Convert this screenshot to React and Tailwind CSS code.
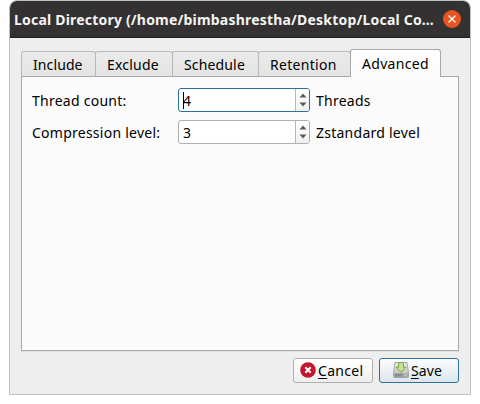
const TABS = [
  { name: 'Include', box: 'w-[75px] pl-[11px]', text: 'tracking-[0.1px]' },
  { name: 'Exclude', box: 'w-[78px] -ml-px pl-[11px]', text: 'tracking-[0.2px]' },
  { name: 'Schedule', box: 'w-[87px] -ml-px pl-[11px]', text: 'tracking-[0.15px]' },
  { name: 'Retention', box: 'w-[93px] -ml-px pl-[11px]', text: 'tracking-[0.3px]' },
];

function SpinBox({ value, focused }) {
  return (
    <div
      className={`flex h-6 w-[132px] shrink-0 overflow-hidden rounded-[3px] border bg-white ${
        focused ? 'border-[#2a71a0]' : 'border-[#b0b0b0]'
      }`}
    >
      <div className="flex flex-1 items-center pl-1">
        <span className={`h-[17px] w-px ${focused ? 'bg-black' : ''}`} />
        <span className="-ml-px pt-0.5">{value}</span>
      </div>
      <div className="flex w-[14px] items-center justify-center border-l border-[#b5b5b5] bg-gradient-to-b from-white to-[#f0f0f0]">
        <svg width="8" height="14" viewBox="0 0 8 14" fill="#5c5c5c">
          <path d="M4 0.5 7.5 4.5H0.5Z" />
          <path d="M4 13.5 7.5 9.5H0.5Z" />
        </svg>
      </div>
    </div>
  );
}

function Row({ label, value, unit, focused }) {
  return (
    <div className="flex h-6 items-center">
      <span className="w-[146px] shrink-0 pt-0.5 tracking-[0.25px]">{label}</span>
      <SpinBox value={value} focused={focused} />
      <span className="ml-1.5 pt-0.5 tracking-[0.25px]">{unit}</span>
    </div>
  );
}

function CancelIcon() {
  return (
    <svg width="16" height="16" viewBox="0 0 16 16" className="-mt-px">
      <circle cx="8" cy="8" r="7.8" fill="#c4162f" />
      <path d="M5.3 5.3 10.7 10.7M10.7 5.3 5.3 10.7" stroke="#fff" strokeWidth="2" />
    </svg>
  );
}

function SaveIcon() {
  return (
    <svg width="16" height="16" viewBox="0 0 16 16" className="-mt-px">
      <defs>
        <linearGradient id="disk" x1="0" y1="0" x2="0" y2="1">
          <stop offset="0" stopColor="#eeeeee" />
          <stop offset="1" stopColor="#b5b5b5" />
        </linearGradient>
      </defs>
      <path d="M2 .5H14L15.5 10.5V14.5Q15.5 15.5 14.5 15.5H1.5Q.5 15.5 .5 14.5V10.5Z" fill="url(#disk)" stroke="#959595" strokeWidth=".8" />
      <path d="M1.2 11.2H14.8V14.8H1.2Z" fill="#a2a2a2" />
      <path d="M2 12.4H9M2 13.9H9" stroke="#757575" strokeWidth=".7" />
      <path d="M11 12H14M11 13.6H14" stroke="#ccc" strokeWidth=".8" />
      <ellipse cx="8" cy="9" rx="5" ry="1.8" fill="#ccc" />
      <path d="M5.5 .5H10.5V5.3H13L8 10.3 3 5.3H5.5Z" fill="#c3e391" stroke="#7ba644" strokeWidth="1" />
    </svg>
  );
}

export default function App() {
  return (
    <div className="h-[404px] w-[480px] overflow-hidden bg-white pl-[9px] font-['Noto_Sans','Open_Sans',sans-serif] text-[14px] leading-5 text-black">
      <div className="flex h-[395px] w-[462px] flex-col overflow-hidden rounded-t-[8px] border border-[#bfbfbf] bg-[#eeeeee]">
        <header className="flex h-[37px] shrink-0 items-center border-b border-[#1d1d1d] bg-[#333132] pl-[4px] text-[#f4f4f2]">
          <h1 className="w-[421px] whitespace-nowrap pt-0.5 text-[14px] font-bold tracking-[0.2px]">
            Local Directory (/home/bimbashrestha/Desktop/Local Co…
          </h1>
          <button className="ml-[8px] flex size-[18px] items-center justify-center rounded-full bg-[#e95420]">
            <svg width="8" height="8" viewBox="0 0 8 8" stroke="#fff" strokeWidth="1.3">
              <path d="M.5 .5 7.5 7.5M7.5 .5 .5 7.5" />
            </svg>
          </button>
        </header>
        <main className="px-[11px] pt-[11px]">
          <div className="flex h-[27px] items-end">
            {TABS.map((tab) => (
              <div
                key={tab.name}
                className={`flex h-[25px] shrink-0 items-center rounded-t-[3px] border border-b-0 border-[#b8b8b8] bg-gradient-to-b from-[#eaeaea] to-[#e4e4e4] pt-0.5 ${tab.box}`}
              >
                <span className={tab.text}>{tab.name}</span>
              </div>
            ))}
            <div className="z-10 -mb-px -ml-px flex h-[28px] w-[91px] shrink-0 items-center rounded-t-[3px] border border-b-0 border-[#a8a8a8] bg-gradient-to-b from-white to-[#fbfbfb] pl-[11px]">
              <span className="tracking-[0.3px]">Advanced</span>
            </div>
          </div>
          <section className="flex h-[275px] w-[438px] flex-col gap-2 border border-[#a8a8a8] bg-[#fbfbfb] pl-[10px] pt-[11px] shadow-[0_1px_0_#e0e0e0]">
            <Row label="Thread count:" value="4" unit="Threads" focused />
            <Row label="Compression level:" value="3" unit="Zstandard level" />
          </section>
          <footer className="mt-[7px] flex w-[438px] justify-end gap-1.5">
            <button className="flex h-[25px] w-20 items-center gap-[2px] rounded-[3px] border border-[#b0b0b0] bg-gradient-to-b from-white to-[#eeeeee] pl-[6px]">
              <CancelIcon />
              <span className="tracking-[0.3px]"><u className="underline-offset-[2px]">C</u>ancel</span>
            </button>
            <button className="flex h-[25px] w-20 items-center gap-[2px] rounded-[3px] border border-[#2a71a0] bg-gradient-to-b from-[#fcfdfe] to-[#dce6ed] pl-[13px]">
              <SaveIcon />
              <span className="tracking-[0.1px]"><u className="underline-offset-[2px]">S</u>ave</span>
            </button>
          </footer>
        </main>
      </div>
    </div>
  );
}
